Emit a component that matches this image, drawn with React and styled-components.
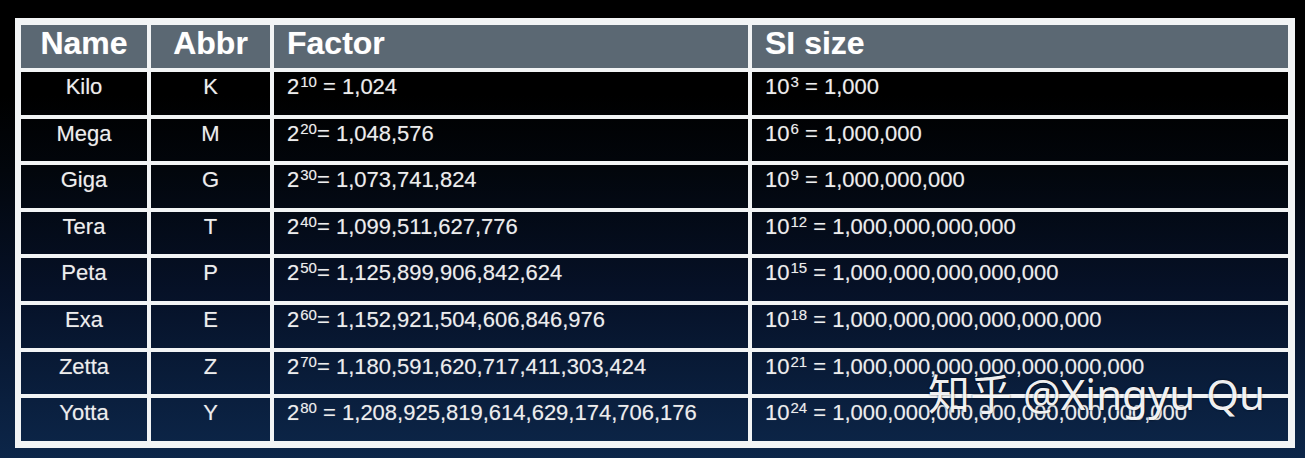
import React from 'react';
import styled, { createGlobalStyle } from 'styled-components';

const BG =
  'linear-gradient(to bottom, #000 0px, #000 95px, #02060c 170px, #061127 290px, #0a1f3e 400px, #0c2649 458px)';

const Global = createGlobalStyle`
  html, body { margin: 0; padding: 0; }
  body { background: #000; }
`;

const Page = styled.div`
  position: relative;
  width: 1305px;
  height: 458px;
  box-sizing: border-box;
  padding: 18px 10px 0 15px;
  background: ${BG};
  background-attachment: fixed;
  font-family: "Liberation Sans", Arial, sans-serif;
  overflow: hidden;
`;

const Frame = styled.div`
  background: #f2f4f5;
  padding: 7px 7px 7px 6px;
`;

const Grid = styled.div`
  display: grid;
  grid-template-columns: 126px 119px 474px 536px;
  grid-template-rows: 43px repeat(8, 42.6px);
  gap: 4px;
`;

const HeadCell = styled.div`
  background: #5b6873;
  color: #ffffff;
  font-weight: 700;
  font-size: 32px;
  line-height: 36px;
  text-align: ${(p) => (p.$center ? 'center' : 'left')};
  padding: 0 13px;
  white-space: nowrap;
  text-shadow: 0 0 1px rgba(255, 255, 255, 0.4);
`;

const Cell = styled.div`
  background: ${BG};
  background-attachment: fixed;
  color: #ededed;
  font-size: 22px;
  line-height: 30px;
  text-align: ${(p) => (p.$center ? 'center' : 'left')};
  padding: 0 13px;
  white-space: nowrap;
  text-shadow: 0 0 1px rgba(255, 255, 255, 0.35);
`;

const Sup = styled.span`
  font-size: 15px;
  line-height: 0;
  vertical-align: 7px;
  margin-left: 1px;
`;

const Watermark = styled.div`
  position: absolute;
  left: 928px;
  top: 373px;
  font-family: "Noto Sans", "Noto Sans CJK SC", sans-serif;
  font-size: 42px;
  line-height: 42px;
  color: rgba(255, 255, 255, 0.95);
  text-shadow: 0 0 2px rgba(0, 0, 0, 0.7);
  white-space: nowrap;
  pointer-events: none;
`;

const rows = [
  ['Kilo', 'K', '10', '1,024', '3', '1,000', ' ', ' '],
  ['Mega', 'M', '20', '1,048,576', '6', '1,000,000', '', ' '],
  ['Giga', 'G', '30', '1,073,741,824', '9', '1,000,000,000', '', ' '],
  ['Tera', 'T', '40', '1,099,511,627,776', '12', '1,000,000,000,000', '', ''],
  ['Peta', 'P', '50', '1,125,899,906,842,624', '15', '1,000,000,000,000,000', '', ''],
  ['Exa', 'E', '60', '1,152,921,504,606,846,976', '18', '1,000,000,000,000,000,000', '', ''],
  ['Zetta', 'Z', '70', '1,180,591,620,717,411,303,424', '21', '1,000,000,000,000,000,000,000', '', ''],
  ['Yotta', 'Y', '80', '1,208,925,819,614,629,174,706,176', '24', '1,000,000,000,000,000,000,000,000', ' ', ''],
];

export default function App() {
  return (
    <>
      <Global />
      <Page>
        <Frame>
          <Grid>
            <HeadCell $center>Name</HeadCell>
            <HeadCell $center>Abbr</HeadCell>
            <HeadCell>Factor</HeadCell>
            <HeadCell>SI size</HeadCell>
            {rows.map(([name, abbr, e2, v2, e10, v10, s2, s10]) => (
              <React.Fragment key={name}>
                <Cell $center>{name}</Cell>
                <Cell $center>{abbr}</Cell>
                <Cell>
                  2<Sup>{e2}</Sup>
                  {s2}= {v2}
                </Cell>
                <Cell>
                  10<Sup>{e10}</Sup>
                  {s10} = {v10}
                </Cell>
              </React.Fragment>
            ))}
          </Grid>
        </Frame>
        <Watermark>知乎 @Xingyu Qu</Watermark>
      </Page>
    </>
  );
}
